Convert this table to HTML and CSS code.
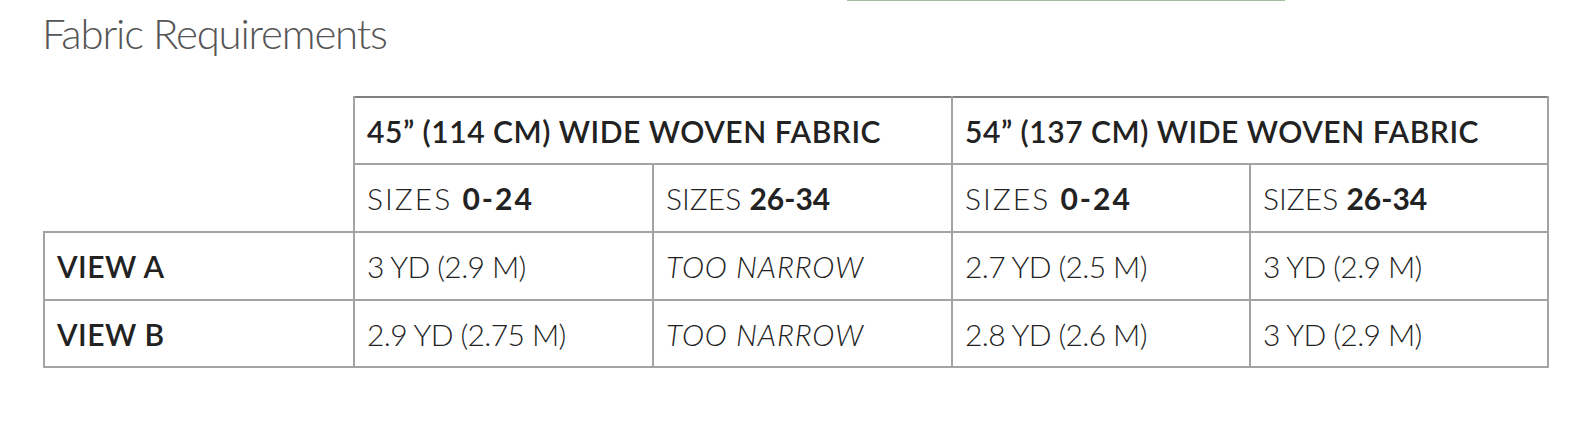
FILE: index.html
```html
<!DOCTYPE html>
<html lang="en">
<head>
<meta charset="utf-8">
<title>Fabric Requirements</title>
<link rel="stylesheet" href="styles.css">
</head>
<body>
<div class="page">
  <div class="topbar"><span class="accent-line"></span></div>
  <h2 class="title">Fabric Requirements</h2>
  <table class="fabric">
    <colgroup>
      <col class="c-label">
      <col class="c-val">
      <col class="c-val">
      <col class="c-val c-narrow">
      <col class="c-val c-narrow">
    </colgroup>
    <thead>
      <tr class="r-short">
        <th class="blank" rowspan="2"></th>
        <th class="width-head" colspan="2">45” (114 CM) WIDE WOVEN FABRIC</th>
        <th class="width-head" colspan="2">54” (137 CM) WIDE WOVEN FABRIC</th>
      </tr>
      <tr>
        <th class="size-head spaced">SIZES <b>0-24</b></th>
        <th class="size-head">SIZES <b>26-34</b></th>
        <th class="size-head spaced">SIZES <b>0-24</b></th>
        <th class="size-head">SIZES <b>26-34</b></th>
      </tr>
    </thead>
    <tbody>
      <tr>
        <th class="row-head">VIEW A</th>
        <td>3 YD (2.9 M)</td>
        <td><em>TOO NARROW</em></td>
        <td>2.7 YD (2.5 M)</td>
        <td>3 YD (2.9 M)</td>
      </tr>
      <tr class="r-short">
        <th class="row-head">VIEW B</th>
        <td>2.9 YD (2.75 M)</td>
        <td><em>TOO NARROW</em></td>
        <td>2.8 YD (2.6 M)</td>
        <td>3 YD (2.9 M)</td>
      </tr>
    </tbody>
  </table>
</div>
</body>
</html>
```
FILE: styles.css
```css
html, body {
  margin: 0;
  padding: 0;
  background: #ffffff;
}

.page {
  width: 1596px;
  height: 424px;
  padding: 0 0 0 43px;
  box-sizing: border-box;
  font-family: Lato, "Open Sans", sans-serif;
}

.topbar {
  height: 1px;
  display: flex;
}

.accent-line {
  display: block;
  margin-left: 804px;
  width: 438px;
  height: 1px;
  background: #a2c09f;
}

.title {
  margin: 7px 0 0 -1px;
  font-family: Lato, sans-serif;
  font-weight: 300;
  font-size: 42px;
  line-height: 50px;
  letter-spacing: -1.2px;
  color: #555555;
}

.fabric {
  margin-top: 38px;
  border-collapse: collapse;
  table-layout: fixed;
  width: 1504px;
  color: #222222;
  font-size: 30px;
}

.c-label { width: 310px; }
.c-val { width: 299px; }
.c-val.c-narrow { width: 298px; }

.fabric tr {
  height: 68px;
}

.fabric tr.r-short {
  height: 67px;
}

.fabric th,
.fabric td {
  border: 2px solid #a3a3a3;
  padding: 0 0 0 12px;
  text-align: left;
  vertical-align: middle;
  white-space: nowrap;
  line-height: 34px;
}

.fabric td {
  font-weight: 300;
  letter-spacing: -0.6px;
}

.fabric th.blank {
  border-top: none;
  border-left: none;
}

.fabric thead tr:first-child th.width-head {
  border-top-color: #808080;
}

.width-head {
  font-weight: 600;
  letter-spacing: 0.55px;
}

.size-head {
  font-weight: 300;
}

.size-head b {
  font-weight: 700;
}

.size-head.spaced {
  letter-spacing: 2px;
}

.row-head {
  font-weight: 600;
  letter-spacing: 0.5px;
}

.fabric em {
  font-style: italic;
  font-weight: 300;
  letter-spacing: 0.8px;
}
```
